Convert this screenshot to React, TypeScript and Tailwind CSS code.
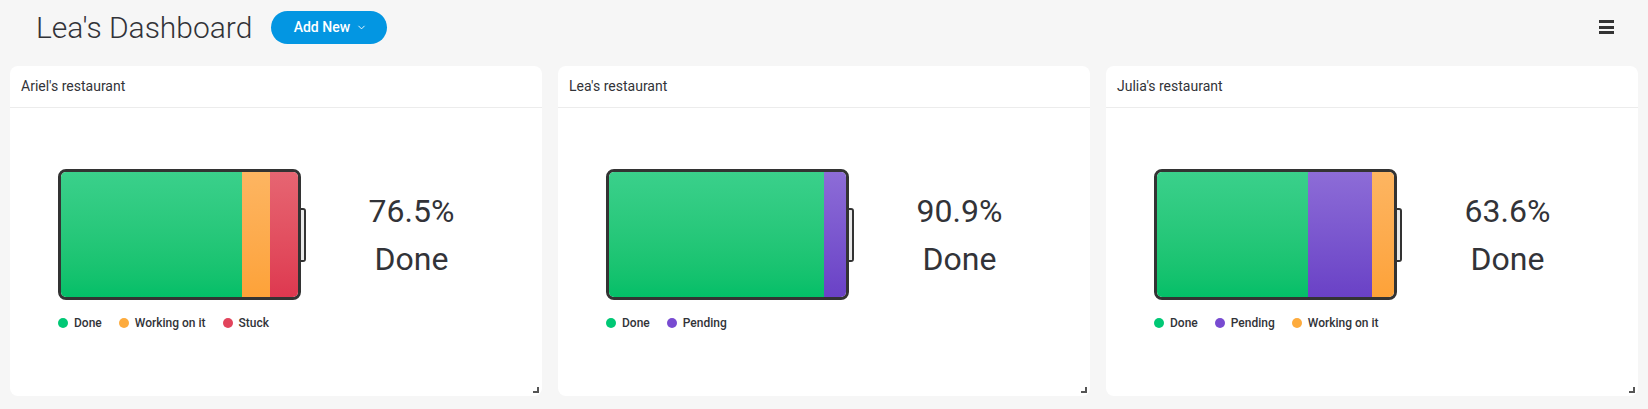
import { ChevronDown } from 'lucide-react'

type Segment = { label: string; value: number; bar: string; dot: string }

const boards: { name: string; percent: string; segments: Segment[] }[] = [
  {
    name: "Ariel's restaurant",
    percent: '76.5%',
    segments: [
      { label: 'Done', value: 13, bar: 'bg-gradient-to-b from-[#3ad08b] to-[#03bf68]', dot: 'bg-[#00c875]' },
      { label: 'Working on it', value: 2, bar: 'bg-gradient-to-b from-[#fdb561] to-[#fda238]', dot: 'bg-[#fdab3d]' },
      { label: 'Stuck', value: 2, bar: 'bg-gradient-to-b from-[#e66572] to-[#de3850]', dot: 'bg-[#e2445c]' },
    ],
  },
  {
    name: "Lea's restaurant",
    percent: '90.9%',
    segments: [
      { label: 'Done', value: 10, bar: 'bg-gradient-to-b from-[#3ad08b] to-[#03bf68]', dot: 'bg-[#00c875]' },
      { label: 'Pending', value: 1, bar: 'bg-gradient-to-b from-[#8d6cd7] to-[#6a41c6]', dot: 'bg-[#784bd1]' },
    ],
  },
  {
    name: "Julia's restaurant",
    percent: '63.6%',
    segments: [
      { label: 'Done', value: 7, bar: 'bg-gradient-to-b from-[#3ad08b] to-[#03bf68]', dot: 'bg-[#00c875]' },
      { label: 'Pending', value: 3, bar: 'bg-gradient-to-b from-[#8d6cd7] to-[#6a41c6]', dot: 'bg-[#784bd1]' },
      { label: 'Working on it', value: 1, bar: 'bg-gradient-to-b from-[#fdb561] to-[#fda238]', dot: 'bg-[#fdab3d]' },
    ],
  },
]

function Battery({ segments }: { segments: Segment[] }) {
  const total = segments.reduce((s, x) => s + x.value, 0)
  return (
    <div className="flex items-center">
      <div className="flex h-[131px] w-[243px] overflow-hidden rounded-[8px] border-[3px] border-[#333333]">
        {segments.map((s) => (
          <div key={s.label} className={`h-full ${s.bar}`} style={{ width: `${(s.value / total) * 100}%` }} />
        ))}
      </div>
      <div className="h-[54px] w-[5px] rounded-r-[3px] border-2 border-l-0 border-[#333333] bg-[#e9e9e9]" />
    </div>
  )
}

function Card({ name, percent, segments }: (typeof boards)[number]) {
  return (
    <div className="relative flex h-[330px] flex-1 flex-col rounded-[8px] bg-white">
      <div className="flex h-[42px] items-center border-b border-[#ececec] px-[11px] text-[14px] text-[#323338]">
        {name}
      </div>
      <div className="pl-[48px] pt-[61px]">
        <div className="flex items-center">
          <Battery segments={segments} />
          <div className="w-[211px] text-center text-[32px] leading-[48px] text-[#323338]">
            <div>{percent}</div>
            <div>Done</div>
          </div>
        </div>
        <div className="mt-[14px] flex items-center gap-[17px] text-[12px] font-medium text-[#323338]">
          {segments.map((s) => (
            <div key={s.label} className="flex items-center gap-[6px]">
              <span className={`h-[10px] w-[10px] rounded-full ${s.dot}`} />
              <span>{s.label}</span>
            </div>
          ))}
        </div>
      </div>
      <div className="absolute bottom-[3px] right-[3px] h-[6px] w-[6px] border-b-2 border-r-2 border-[#555555]" />
    </div>
  )
}

export default function App() {
  return (
    <div className="h-[409px] bg-[#f6f6f6] font-['Roboto',sans-serif]">
      <div className="flex h-[54px] items-center pl-[36px] pr-[34px]">
        <h1 className="text-[30px] font-light text-[#323338]">Lea's Dashboard</h1>
        <button className="ml-[19px] flex h-[33px] w-[116px] items-center justify-center gap-[6px] rounded-full bg-[#0396e2] pl-[2px] text-[14px] font-medium text-white">
          Add New
          <ChevronDown className="h-[11px] w-[11px]" strokeWidth={2} />
        </button>
        <div className="ml-auto flex w-[15px] flex-col gap-[2.5px]">
          <span className="h-[3px] bg-[#333333]" />
          <span className="h-[3px] bg-[#333333]" />
          <span className="h-[3px] bg-[#333333]" />
        </div>
      </div>
      <div className="mt-[12px] flex gap-4 px-[10px]">
        {boards.map((b) => (
          <Card key={b.name} {...b} />
        ))}
      </div>
    </div>
  )
}
